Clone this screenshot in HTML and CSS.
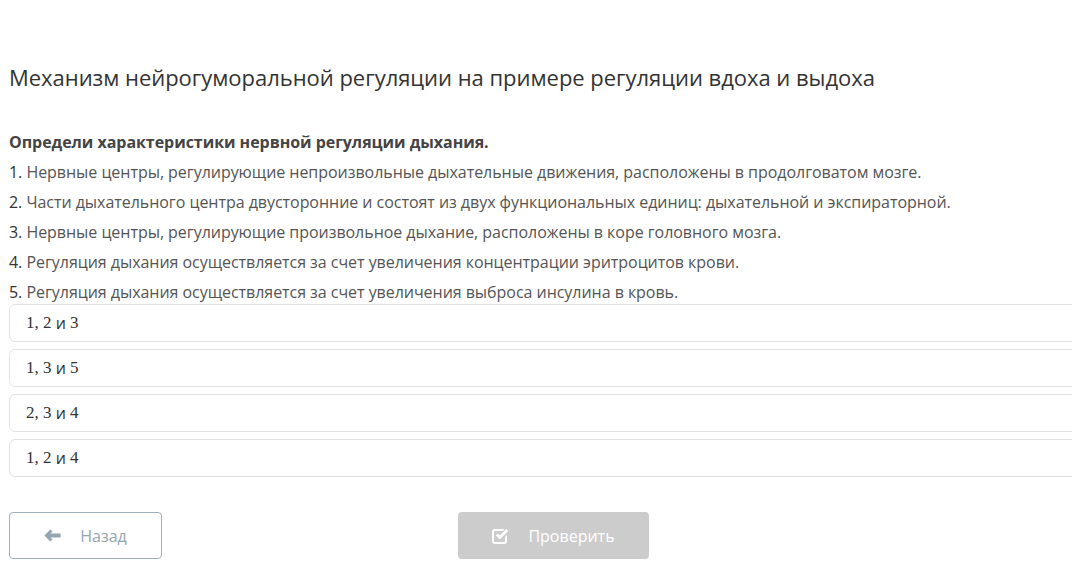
FILE: index.html
```html
<!DOCTYPE html>
<html lang="ru">

<head>
    <meta charset="UTF-8">
    <meta name="viewport" content="width=device-width, initial-scale=1.0">
    <title>Механизм нейрогуморальной регуляции</title>
    <link rel="stylesheet" href="styles.css">
</head>

<body>
    <div class="page">
        <h1 class="task-title">Механизм нейрогуморальной регуляции на примере регуляции вдоха и выдоха</h1>

        <div class="question">
            <p class="question-lead">Определи характеристики нервной регуляции дыхания.</p>
            <p><span class="num">1.</span> Нервные центры, регулирующие непроизвольные дыхательные движения, расположены в продолговатом мозге.</p>
            <p><span class="num">2.</span> Части дыхательного центра двусторонние и состоят из двух функциональных единиц: дыхательной и экспираторной.</p>
            <p><span class="num">3.</span> Нервные центры, регулирующие произвольное дыхание, расположены в коре головного мозга.</p>
            <p><span class="num">4.</span> Регуляция дыхания осуществляется за счет увеличения концентрации эритроцитов крови.</p>
            <p><span class="num">5.</span> Регуляция дыхания осуществляется за счет увеличения выброса инсулина в кровь.</p>
        </div>

        <div class="options">
            <div class="option"><span class="math">1, 2</span> и <span class="math">3</span></div>
            <div class="option"><span class="math">1, 3</span> и <span class="math">5</span></div>
            <div class="option"><span class="math">2, 3</span> и <span class="math">4</span></div>
            <div class="option"><span class="math">1, 2</span> и <span class="math">4</span></div>
        </div>

        <div class="actions">
            <button class="btn btn-back">
                <svg width="17" height="13" viewBox="0 0 17 13" xmlns="http://www.w3.org/2000/svg">
                    <path d="M0.4 6.5 L6.3 0.4 L8.5 2.6 L6.4 4.6 H16.6 V8.4 H6.4 L8.5 10.4 L6.3 12.6 Z" fill="currentColor" />
                </svg>
                <span>Назад</span>
            </button>
            <button class="btn btn-check">
                <svg width="17" height="16" viewBox="0 0 17 16" xmlns="http://www.w3.org/2000/svg">
                    <path d="M13 9 V13 C13 13.8 12.8 14 12 14 H3 C2.2 14 2 13.8 2 13 V4 C2 3.2 2.2 3 3 3 H10.6 L12.5 1.1 C12.3 1 12.2 1 12 1 H3 C1.2 1 0 2.2 0 4 V13 C0 14.8 1.2 16 3 16 H12 C13.8 16 15 14.8 15 13 V7 Z" fill="currentColor" />
                    <path d="M3.8 7.4 L5.8 5.4 L7.8 7.4 L14.3 0.9 L16.3 2.9 L7.8 11.4 Z" fill="currentColor" />
                </svg>
                <span>Проверить</span>
            </button>
        </div>
    </div>
</body>

</html>
```

FILE: styles.css
```css
* {
    margin: 0;
    padding: 0;
    box-sizing: border-box;
}

body {
    background-color: #fff;
    color: #555;
    font-family: 'Open Sans', 'Liberation Sans', sans-serif;
    overflow: hidden;
}

.page {
    width: 1100px;
    padding: 62px 0 0 9px;
}

.task-title {
    font-size: 22px;
    font-weight: 400;
    line-height: 30px;
    color: #333;
    letter-spacing: -0.03px;
}

.question {
    margin-top: 35px;
    font-size: 16px;
    line-height: 30px;
    letter-spacing: -0.04px;
}

.question-lead {
    font-weight: 700;
    color: #444;
}

.num {
    color: #333;
}

.options {
    margin-top: -3px;
    display: flex;
    flex-direction: column;
    gap: 7px;
}

.option {
    height: 38px;
    border: 1px solid #e2e2e2;
    border-radius: 6px;
    padding: 0 16px;
    display: flex;
    align-items: center;
    font-size: 16px;
    color: #333;
    white-space: pre;
}

.math {
    font-family: 'Liberation Serif', 'DejaVu Serif', serif;
    font-size: 17px;
}

.actions {
    margin-top: 35px;
    display: flex;
    gap: 296px;
}

.btn {
    height: 47px;
    border-radius: 4px;
    font-family: 'Open Sans', 'Liberation Sans', sans-serif;
    font-size: 16px;
    display: flex;
    align-items: center;
    justify-content: center;
    gap: 19px;
    cursor: pointer;
}

.btn-back {
    width: 153px;
    background-color: #fff;
    border: 1px solid #9fb0ba;
    color: #95a5b0;
}

.btn-check {
    width: 191px;
    background-color: #cccccc;
    border: none;
    color: #fff;
}
```
